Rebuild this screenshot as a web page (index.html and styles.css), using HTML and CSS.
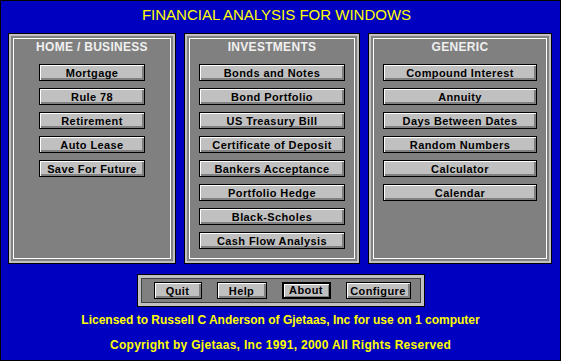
FILE: index.html
```html
<!DOCTYPE html>
<html lang='en-US'>
<head>
	<meta charset='UTF-8'>
	<title>Financial Analysis for Windows</title>
	<link rel="stylesheet" href="styles.css">
</head>
<body>
<div class='screen'>
	<h1 class='app-title'>FINANCIAL ANALYSIS FOR WINDOWS</h1>

	<div class='groups'>
		<section class='group home'>
			<div class='group-inner'>
				<h2>HOME / BUSINESS</h2>
				<div class='buttons'>
					<button class='btn'>Mortgage</button>
					<button class='btn'>Rule 78</button>
					<button class='btn'>Retirement</button>
					<button class='btn'>Auto Lease</button>
					<button class='btn'>Save For Future</button>
				</div>
			</div>
		</section>

		<section class='group investments'>
			<div class='group-inner'>
				<h2>INVESTMENTS</h2>
				<div class='buttons'>
					<button class='btn'>Bonds and Notes</button>
					<button class='btn'>Bond Portfolio</button>
					<button class='btn'>US Treasury Bill</button>
					<button class='btn'>Certificate of Deposit</button>
					<button class='btn'>Bankers Acceptance</button>
					<button class='btn'>Portfolio Hedge</button>
					<button class='btn'>Black-Scholes</button>
					<button class='btn'>Cash Flow Analysis</button>
				</div>
			</div>
		</section>

		<section class='group generic'>
			<div class='group-inner'>
				<h2>GENERIC</h2>
				<div class='buttons'>
					<button class='btn'>Compound Interest</button>
					<button class='btn'>Annuity</button>
					<button class='btn'>Days Between Dates</button>
					<button class='btn'>Random Numbers</button>
					<button class='btn'>Calculator</button>
					<button class='btn'>Calendar</button>
				</div>
			</div>
		</section>
	</div>

	<div class='toolbar'>
		<button class='btn quit'>Quit</button>
		<button class='btn help'>Help</button>
		<button class='btn about default'>About</button>
		<button class='btn configure'>Configure</button>
	</div>

	<p class='license'>Licensed to Russell C Anderson of Gjetaas, Inc for use on 1 computer</p>
	<p class='copyright'>Copyright by Gjetaas, Inc 1991, 2000 All Rights Reserved</p>
</div>
</body>
</html>
```

FILE: styles.css
```css
:root {
	--color-desktop: #0000c0;
	--color-face: #c0c0c0;
	--color-shadow: #808080;
	--color-highlight: #ffffff;
	--color-label: #ffff00;
}

html, body {
	margin: 0;
	padding: 0;
}

body {
	font-family: "Liberation Sans", Arial, sans-serif;
}

.screen {
	box-sizing: border-box;
	width: 561px;
	height: 361px;
	border: 1px solid #000;
	background: var(--color-desktop);
	overflow: hidden;
}

.app-title {
	margin: 0;
	padding: 6px 8px 0 0;
	height: 26px;
	box-sizing: border-box;
	font-size: 15px;
	line-height: 16px;
	font-weight: normal;
	color: var(--color-label);
	text-align: center;
}

/* the three groups of calculators */

.groups {
	display: grid;
	grid-template-columns: 168px 176px 184px;
	column-gap: 8px;
	margin-top: 6px;
	padding-left: 7px;
}

.group {
	box-sizing: border-box;
	height: 231px;
	border: 1px solid #000;
	box-shadow: inset 0 0 0 2px var(--color-face);
	background: var(--color-shadow);
	padding: 4px;
}

.group-inner {
	box-sizing: border-box;
	height: 100%;
	border: 1px solid var(--color-highlight);
}

.group h2 {
	margin: 0;
	padding-top: 1px;
	font-size: 12px;
	line-height: 14px;
	font-weight: bold;
	letter-spacing: .3px;
	color: #f0f0f0;
	text-align: center;
}

.buttons {
	display: flex;
	flex-direction: column;
	align-items: center;
	gap: 7px;
	margin-top: 10px;
}

.home .btn { width: 106px; }
.investments .btn { width: 146px; }
.generic .btn { width: 154px; }

/* 3D push button */

.btn {
	box-sizing: border-box;
	height: 17px;
	padding: 0;
	border: 1px solid #000;
	background: var(--color-face);
	box-shadow:
		inset 1px 1px 0 var(--color-highlight),
		inset -2px -2px 0 var(--color-shadow);
	font-family: "Liberation Sans", Arial, sans-serif;
	font-size: 11px;
	line-height: 14px;
	font-weight: bold;
	letter-spacing: .4px;
	color: #000;
	text-align: center;
	white-space: nowrap;
}

/* Quit / Help / About / Configure */

.toolbar {
	box-sizing: border-box;
	display: flex;
	align-items: center;
	gap: 15px;
	width: 288px;
	height: 33px;
	margin: 10px auto 0;
	padding-left: 16px;
	border: 1px solid #000;
	background: var(--color-shadow);
	box-shadow:
		inset 0 0 0 3px var(--color-face),
		inset 0 0 0 4px #404040;
}

.toolbar .btn {
	height: 17px;
}

.toolbar .quit { width: 48px; }
.toolbar .help { width: 50px; }
.toolbar .about { width: 49px; }
.toolbar .configure { width: 65px; }

.btn.default {
	border-width: 2px;
	box-shadow:
		inset 1px 1px 0 var(--color-highlight),
		inset -1px -1px 0 var(--color-shadow);
	line-height: 13px;
}

.license,
.copyright {
	margin: 0;
	font-size: 12px;
	line-height: 14px;
	font-weight: bold;
	color: var(--color-label);
	text-align: center;
}

.license {
	margin-top: 6px;
}

.copyright {
	margin-top: 11px;
	letter-spacing: .3px;
}
```
